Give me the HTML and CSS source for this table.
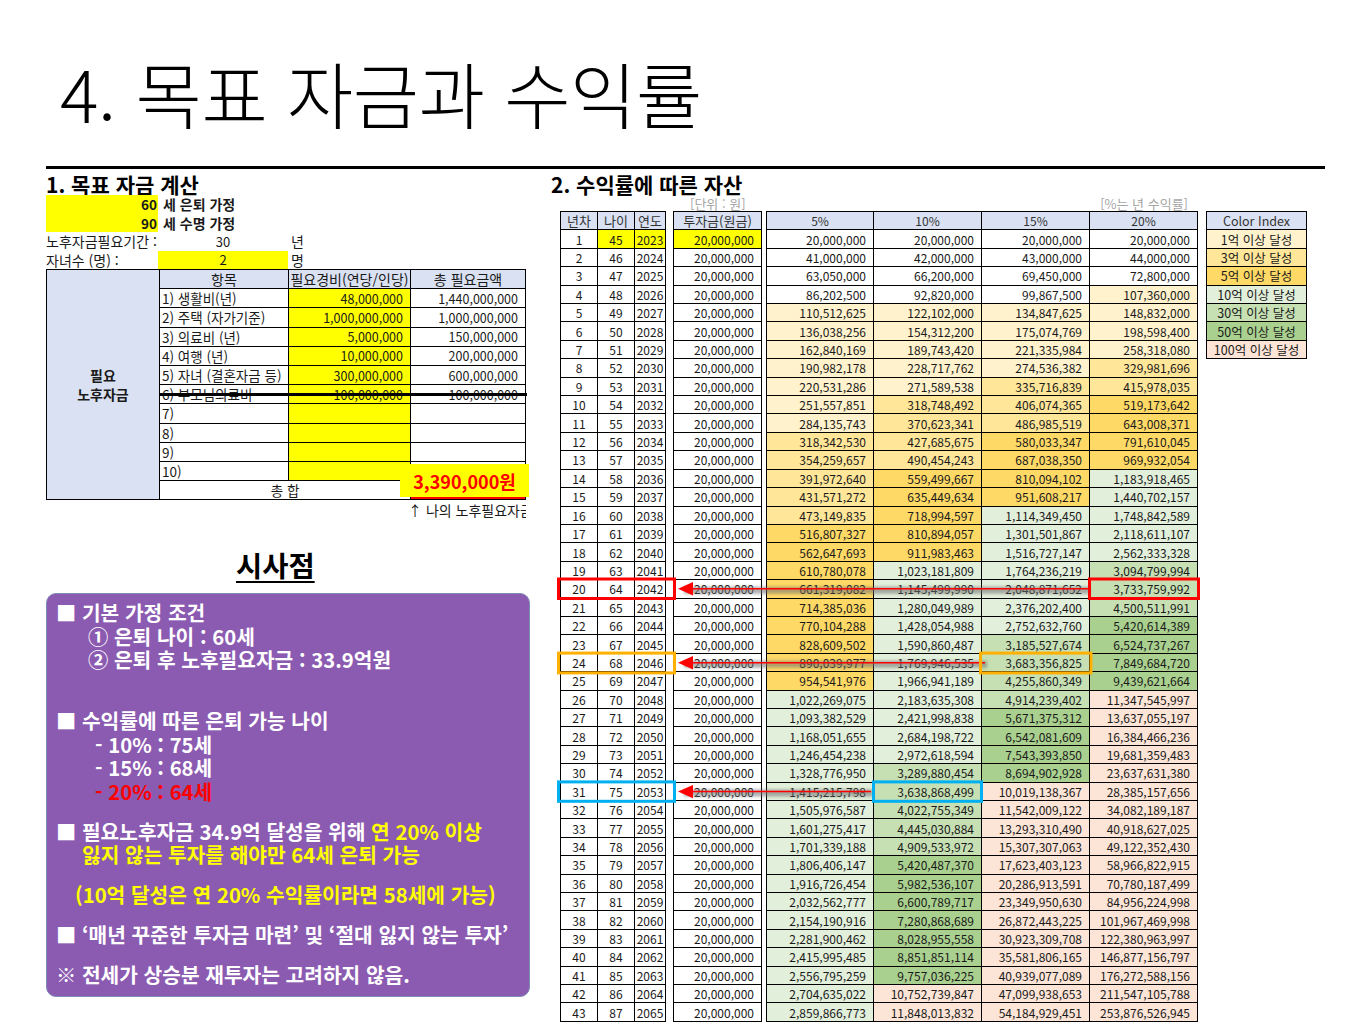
FILE: index.html
```html
<!DOCTYPE html>
<html lang="ko">
<head>
<meta charset="utf-8">
<title>4. 목표 자금과 수익률</title>
<link rel="stylesheet" href="styles.css">
</head>
<body>
<div class="slide">
  <header class="title-bar"><h1 class="title">4. 목표 자금과 수익률</h1></header>
  <div class="rule"></div>
  <main class="content">
    <section class="left">
      <h2 class="sec-title">1. 목표 자금 계산</h2>
      <div class="info">
        <div class="yel num">60</div><div class="lbl">세 은퇴 가정</div>
        <div class="yel num">90</div><div class="lbl">세 수명 가정</div>
        <div>노후자금필요기간 :</div><div class="ctr">30</div><div class="unit">년</div>
        <div>자녀수 (명) :</div><div class="ctr yel">2</div><div class="unit">명</div>
      </div>
      <div class="need-wrap">
        <div class="need">
          <div class="side">필요<br>노후자금</div>
          <div class="nh">항목</div><div class="nh">필요경비(연당/인당)</div><div class="nh">총 필요금액</div>
          <div>1) 생활비(년)</div><div class="yel r">48,000,000</div><div class="r">1,440,000,000</div>
          <div>2) 주택 (자가기준)</div><div class="yel r">1,000,000,000</div><div class="r">1,000,000,000</div>
          <div>3) 의료비 (년)</div><div class="yel r">5,000,000</div><div class="r">150,000,000</div>
          <div>4) 여행 (년)</div><div class="yel r">10,000,000</div><div class="r">200,000,000</div>
          <div>5) 자녀 (결혼자금 등)</div><div class="yel r">300,000,000</div><div class="r">600,000,000</div>
          <div>6) 부모님의료비</div><div class="yel r">100,000,000</div><div class="r">100,000,000</div>
          <div>7)</div><div class="yel"></div><div></div>
          <div>8)</div><div class="yel"></div><div></div>
          <div>9)</div><div class="yel"></div><div></div>
          <div>10)</div><div class="yel"></div><div></div>
          <div class="sum">총 합</div><div class="total"></div>
        </div>
        <div class="strike"></div>
        <div class="total-badge">3,390,000원</div>
      </div>
      <div class="note">↑ 나의 노후필요자금</div>
      <h2 class="insight-title">시사점</h2>
      <div class="insight">
        <div class="line">■ 기본 가정 조건</div>
        <div class="line in1">① 은퇴 나이 : 60세</div>
        <div class="line in1">② 은퇴 후 노후필요자금 : 33.9억원</div>
        <div class="line gap-big">■ 수익률에 따른 은퇴 가능 나이</div>
        <div class="line in2">- 10% : 75세</div>
        <div class="line in2">- 15% : 68세</div>
        <div class="line in2 red">- 20% : 64세</div>
        <div class="line gap">■ 필요노후자금 34.9억 달성을 위해 <span class="yl">연 20% 이상</span></div>
        <div class="line in3 yl">잃지 않는 투자를 해야만 64세 은퇴 가능</div>
        <div class="line gap in4 yl">(10억 달성은 연 20% 수익률이라면 58세에 가능)</div>
        <div class="line gap">■ ‘매년 꾸준한 투자금 마련’ 및 ‘절대 잃지 않는 투자’</div>
        <div class="line gap">※ 전세가 상승분 재투자는 고려하지 않음.</div>
      </div>
    </section>
    <section class="right">
      <h2 class="sec-title">2. 수익률에 따른 자산</h2>
      <div class="meta"><span>[단위 : 원]</span><span class="meta-r">[%는 년 수익률]</span></div>
      <div class="tables">
        <div class="grid ga" id="ga"><div class="h">년차</div><div class="h">나이</div><div class="h">연도</div></div>
        <div class="grid gb" id="gb"><div class="h">투자금(원금)</div></div>
        <div class="grid gc" id="gc"><div class="h">5%</div><div class="h">10%</div><div class="h">15%</div><div class="h">20%</div></div>
        <div class="grid gi">
          <div class="h">Color Index</div>
          <div class="t1">1억 이상 달성</div>
          <div class="t3">3억 이상 달성</div>
          <div class="t5">5억 이상 달성</div>
          <div class="t10">10억 이상 달성</div>
          <div class="t30">30억 이상 달성</div>
          <div class="t50">50억 이상 달성</div>
          <div class="t100">100억 이상 달성</div>
        </div>
      </div>
    </section>
  </main>
  <svg class="marks" viewBox="0 0 1368 1026" xmlns="http://www.w3.org/2000/svg">
    <defs>
      <filter id="sh" filterUnits="userSpaceOnUse" x="0" y="0" width="1368" height="1026"><feGaussianBlur stdDeviation="1.6"/></filter>
    </defs>
    <line class="shadow" x1="684" y1="590.2" x2="1090" y2="590.2" filter="url(#sh)"/>
    <line class="shaft" x1="690" y1="588.7" x2="1088" y2="588.7"/>
    <polygon class="head" points="678,588.7 693,582 693,595.4"/>
    <line class="shadow" x1="684" y1="664.3" x2="987" y2="664.3" filter="url(#sh)"/>
    <line class="shaft" x1="690" y1="662.8" x2="985" y2="662.8"/>
    <polygon class="head" points="678,662.8 693,656.1 693,669.5"/>
    <line class="shadow" x1="684" y1="793.1" x2="873" y2="793.1" filter="url(#sh)"/>
    <line class="shaft" x1="690" y1="791.6" x2="871" y2="791.6"/>
    <polygon class="head" points="678,791.6 693,784.9 693,798.3"/>
    <rect class="box-red" x="558.5" y="579" width="116" height="19.5"/>
    <rect class="box-red" x="1089.5" y="579" width="109" height="19.5"/>
    <rect class="box-org" x="558.5" y="653.1" width="116" height="19.8"/>
    <rect class="box-org" x="980.5" y="653.1" width="110.5" height="19.8"/>
    <rect class="box-blu" x="558.5" y="781.9" width="116" height="19.4"/>
    <rect class="box-blu" x="873.5" y="781.9" width="108" height="19.4"/>
  </svg>
</div>
<script src="script.js"></script>
</body>
</html>
```

FILE: styles.css
```css
* { box-sizing: border-box; }
html, body { margin: 0; padding: 0; background: #fff; }
body { font-family: "Noto Sans CJK KR", "Noto Sans", sans-serif; color: #1a1a1a; }

.slide { position: relative; width: 1368px; height: 1026px; overflow: hidden; }

.title-bar { height: 166px; padding: 56px 0 0 60px; }
.title { margin: 0; font-size: 72px; line-height: 72px; font-weight: 300; letter-spacing: -0.4px; color: #000; }
.rule { height: 3px; width: 1279px; margin-left: 46px; background: #000; }

.content { display: flex; gap: 21px; padding: 4px 0 0 46px; }
.left { width: 484px; flex: none; }
.right { flex: none; }

.sec-title { margin: 0; font-size: 21px; line-height: 22px; font-weight: 700; color: #000; }

/* info */
.info { display: grid; grid-template-columns: 112px 130px 1fr; grid-auto-rows: 18.5px; font-size: 14px; }
.info > div { display: flex; align-items: center; white-space: nowrap; }
.info > .yel { background: #ffff00; }
.info > .num { justify-content: flex-end; padding-right: 1px; font-weight: 700; font-size: 13.5px; }
.info > .lbl { grid-column: 2 / span 2; padding-left: 5px; font-weight: 700; }
.info > .ctr { justify-content: center; font-size: 13px; }
.info > .unit { padding-left: 3px; }

/* need table */
.need-wrap { position: relative; }
.need { display: grid; grid-template-columns: 112px 128px 121px 114px; grid-auto-rows: 18.2px; gap: 1px; padding: 1px; width: 480px; background: #000; font-size: 13.5px; }
.need > div { background: #fff; display: flex; align-items: center; white-space: nowrap; overflow: hidden; padding: 0 2px; }
.need > .side { grid-row: 1 / span 12; background: #d9e1f2; justify-content: center; text-align: center; font-weight: 700; font-size: 14px; line-height: 19px; }
.need > .nh { background: #d9e1f2; justify-content: center; font-size: 14px; padding: 0; }
.need > .yel { background: #ffff00; }
.need > .r { justify-content: flex-end; padding-right: 7px; font-size: 12.5px; }
.need > .sum { grid-column: 2 / span 2; justify-content: center; }
.need > .total { box-shadow: inset 0 0 0 2px #ff0000; }
.strike { position: absolute; left: 113px; top: 123.5px; width: 368px; height: 3px; background: #000; }
.total-badge { position: absolute; left: 354px; top: 195px; width: 129px; height: 33px; background: #ffff00; color: #ff0000; font-size: 18px; font-weight: 700; display: flex; align-items: center; justify-content: center; }
.note { width: 480px; overflow: hidden; white-space: nowrap; padding-left: 362px; font-size: 14px; line-height: 20px; }

/* insight */
.insight-title { margin: 28px 0 0 190px; font-size: 28.5px; line-height: 34px; font-weight: 700; color: #000; text-decoration: underline; text-underline-offset: 4px; }
.insight { margin-top: 11px; height: 404px; background: #8b5ab1; border: 1px solid #7d8cb5; border-radius: 10px; padding: 7px 0 0 9px; color: #fff; font-size: 20.3px; font-weight: 700; line-height: 23.5px; }
.line { white-space: nowrap; }
.in1 { padding-left: 32px; }
.in2 { padding-left: 39px; }
.in3 { padding-left: 26px; }
.in4 { padding-left: 19px; }
.gap-big { margin-top: 37.5px; }
.gap { margin-top: 16.5px; }
.yl { color: #ffff00; }
.red { color: #ff0000; }

/* right tables */
.meta { display: flex; width: 637px; height: 17px; padding-left: 139px; font-size: 13px; line-height: 17px; color: #a6a6a6; }
.meta-r { margin-left: auto; }
.tables { display: flex; align-items: flex-start; margin-left: 9px; margin-top: -1px; }
.grid { display: grid; gap: 1px; padding: 1px; background: #000; grid-auto-rows: 17.41px; font-size: 12px; }
.grid > div { background: #fff; display: flex; align-items: center; white-space: nowrap; overflow: hidden; color: #1a1a1a; }
.grid > .h { background: #d9e1f2; justify-content: center; color: #333; font-size: 13px; }
.ga { grid-template-columns: 36px 36px 30px; }
.gb { grid-template-columns: 87px; margin-left: 7px; }
.gc { grid-template-columns: 106px 107px 107px 107px; margin-left: 4px; }
.gi { grid-template-columns: 99px; margin-left: 8px; font-size: 12.5px; }
.gc > .h { font-size: 12px; }
.gi > .h { font-size: 12.5px; }
.ga > div, .gi > div { justify-content: center; }
.gb > div, .gc > div { justify-content: flex-end; padding-right: 7px; }
.gb > .h, .gc > .h { justify-content: center; padding-right: 0; }
.grid > .yel { background: #ffff00; }
.grid > .t1 { background: #fff2cc; }
.grid > .t3 { background: #ffe699; }
.grid > .t5 { background: #ffd966; }
.grid > .t10 { background: #e2efda; }
.grid > .t30 { background: #c6e0b4; }
.grid > .t50 { background: #a9d08e; }
.grid > .t100 { background: #fce4d6; }

/* overlay marks */
.marks { position: absolute; left: 0; top: 0; width: 1368px; height: 1026px; pointer-events: none; }
.shadow { stroke: #6e6e6e; stroke-width: 7; opacity: 0.55; }
.shaft { stroke: #ff0000; stroke-width: 1.5; }
.head { fill: #ff0000; }
.box-red, .box-org, .box-blu { fill: none; stroke-width: 3; }
.box-red { stroke: #ff0000; }
.box-org { stroke: #ffb000; }
.box-blu { stroke: #00b0f0; }
```

FILE: script.js
```js
(function () {
  var ga = document.getElementById('ga');
  var gb = document.getElementById('gb');
  var gc = document.getElementById('gc');
  var rates = [0.05, 0.10, 0.15, 0.20];
  var vals = [0, 0, 0, 0];
  var PRINCIPAL = 20000000;
  function fmt(v) { return String(Math.round(v)).replace(/\B(?=(\d{3})+(?!\d))/g, ','); }
  function tier(v) {
    if (v >= 1e10) return 't100';
    if (v >= 5e9) return 't50';
    if (v >= 3e9) return 't30';
    if (v >= 1e9) return 't10';
    if (v >= 5e8) return 't5';
    if (v >= 3e8) return 't3';
    if (v >= 1e8) return 't1';
    return '';
  }
  function cell(parent, text, cls) {
    var d = document.createElement('div');
    if (cls) d.className = cls;
    d.textContent = text;
    parent.appendChild(d);
  }
  for (var n = 1; n <= 43; n++) {
    var first = n === 1;
    cell(ga, String(n), '');
    cell(ga, String(44 + n), first ? 'yel' : '');
    cell(ga, String(2022 + n), first ? 'yel' : '');
    cell(gb, fmt(PRINCIPAL), first ? 'yel' : '');
    for (var i = 0; i < 4; i++) {
      vals[i] = vals[i] * (1 + rates[i]) + PRINCIPAL;
      cell(gc, fmt(vals[i]), tier(vals[i]));
    }
  }
})();
```
